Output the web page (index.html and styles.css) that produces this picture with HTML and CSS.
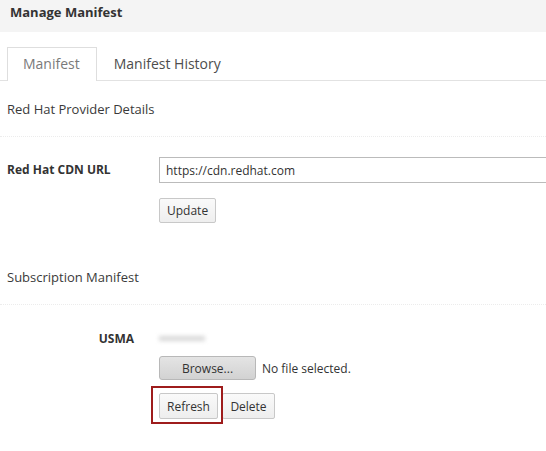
FILE: index.html
```html
<!DOCTYPE html>
<html>
<head>
<meta charset="utf-8">
<link rel="stylesheet" href="styles.css">
</head>
<body>
<div class="header">Manage Manifest</div>
<div class="tabs">
  <div class="tab active">Manifest</div>
  <div class="tab">Manifest History</div>
</div>
<div class="content">
  <div class="section-title">Red Hat Provider Details</div>
  <div class="divider"></div>
  <div class="form-row">
    <div class="label left">Red Hat CDN URL</div>
    <div class="field">
      <input class="text-input" type="text" value="https://cdn.redhat.com">
      <div class="btn-row"><button class="btn">Update</button></div>
    </div>
  </div>
  <div class="section-title second">Subscription Manifest</div>
  <div class="divider"></div>
  <div class="form-row usma">
    <div class="label right">USMA</div>
    <div class="field">
      <div class="redacted"></div>
      <div class="file-row"><button class="btn browse">Browse...</button><span class="nofile">No file selected.</span></div>
      <div class="btn-row actions">
        <span class="highlight-wrap"><button class="btn">Refresh</button><span class="highlight"></span></span>
        <button class="btn">Delete</button>
      </div>
    </div>
  </div>
</div>
</body>
</html>
```
FILE: styles.css
```css
html, body {
  margin: 0;
  padding: 0;
  background: #fff;
  overflow: hidden;
}
body {
  font-family: "Open Sans", "Liberation Sans", sans-serif;
  color: #363636;
  font-size: 13px;
  width: 546px;
  min-height: 451px;
}
.header {
  background: #f4f4f4;
  height: 32px;
  box-sizing: border-box;
  padding: 3px 0 0 10px;
  font-weight: bold;
  font-size: 13px;
  color: #333;
}
.tabs {
  display: flex;
  margin-top: 15px;
  padding-left: 7px;
  border-bottom: 1px solid #e2e2e2;
  height: 34px;
  box-sizing: border-box;
}
.tab {
  font-size: 14px;
  color: #4d4d4d;
  padding: 0 16px;
  line-height: 32px;
  border: 1px solid transparent;
  border-bottom: none;
}
.tab.active {
  color: #7a7a7a;
  border-color: #dedede;
  background: #fff;
  height: 34px;
  box-sizing: border-box;
  padding: 0 16px 0 15px;
}
.content {
  padding-left: 7px;
}
.section-title {
  margin-top: 19px;
  line-height: 18px;
  font-size: 13px;
  color: #3a3a3a;
}
.section-title.second {
  margin-top: 45px;
}
.divider {
  margin-top: 18px;
  border-top: 1px dotted #ececec;
  margin-left: -7px;
}
.form-row {
  display: grid;
  grid-template-columns: 152px 1fr;
  margin-top: 20px;
}
.label {
  font-weight: bold;
  font-size: 12px;
  color: #333;
  line-height: 26px;
}
.label.right {
  text-align: right;
  padding-right: 25px;
}
.text-input {
  display: block;
  width: 400px;
  height: 26px;
  box-sizing: border-box;
  border: 1px solid #bbb;
  border-right: none;
  padding: 0 6px;
  font-family: "Open Sans", "Liberation Sans", sans-serif;
  font-size: 12px;
  color: #333;
  margin: 0;
  outline: none;
}
.btn-row {
  margin-top: 15px;
  display: flex;
  gap: 4px;
}
.btn {
  font-family: "Open Sans", "Liberation Sans", sans-serif;
  font-size: 12px;
  color: #333;
  background: linear-gradient(#fafafa, #eeeeee);
  border: 1px solid #c8c8c8;
  border-radius: 2px;
  height: 25px;
  padding: 0 7px;
  margin: 0;
  line-height: 23px;
}
.usma {
  margin-top: 24px;
}
.usma .label {
  line-height: 20px;
}
.redacted {
  width: 46px;
  height: 5px;
  margin-top: 7px;
  background: #d8d8d8;
  filter: blur(2px);
}
.file-row {
  display: flex;
  align-items: center;
  margin-top: 15px;
}
.browse {
  width: 97px;
  height: 24px;
  background: linear-gradient(#e4e4e4, #d2d2d2);
  border: 1px solid #b8b8b8;
  border-radius: 3px;
}
.nofile {
  margin-left: 6px;
  font-size: 12px;
  color: #333;
}
.actions {
  margin-top: 13px;
  gap: 4px;
}
.highlight-wrap {
  position: relative;
  display: inline-block;
}
.highlight-wrap .btn {
  width: 59px;
  height: 26px;
}
.highlight {
  position: absolute;
  left: -8px;
  top: -7px;
  width: 72px;
  height: 38px;
  box-sizing: border-box;
  border: 2px solid #9e1c1c;
}
.actions > .btn {
  height: 26px;
  width: 53px;
}
```
